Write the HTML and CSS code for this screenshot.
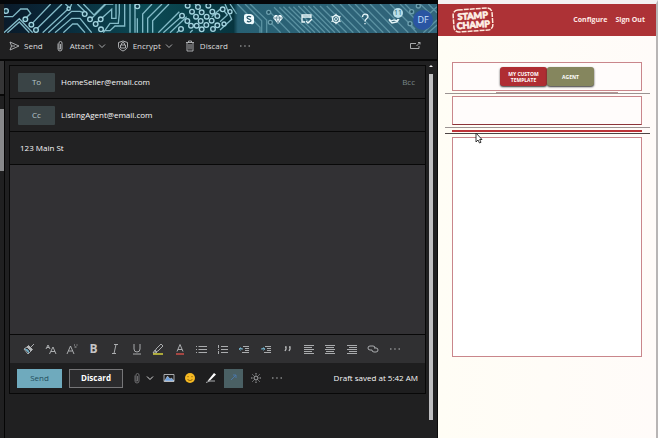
FILE: index.html
```html
<!DOCTYPE html>
<html lang="en">
<head>
<meta charset="utf-8">
<title>Mail</title>
<link rel="stylesheet" href="styles.css">
</head>
<body>
<div class="app">
  <main class="mail">
    <header class="banner">
      <svg class="circuit" viewBox="12 12 1299 87" preserveAspectRatio="xMinYMin slice" aria-hidden="true">
        <g class="trace">
          <path d="M12 50H38L62 27H82L92 40L78 54M12 98L58 56L98 98M22 98L58 66L88 98M99 68L152 12M112 85L186 12M128 98L205 26M145 98L215 34H240L262 42M165 98L215 55H240L275 98M190 98L218 72H232L255 98M205 20L196 12M215 12L210 24M232 12L256 36M250 12L282 45L315 12M276 54L318 12H340M290 68L335 28V55H348V12M298 92H330L345 78H374V12M310 98L330 70H355L358 40V12M390 12V98M405 12V98M412 24V12M428 98V42L456 12M412 98V55M443 98V55L486 12M458 98V62L507 12M475 98L538 35M490 98L546 48M510 98L560 50M530 98L545 84M560 20L570 12M585 12L592 20M620 12L628 20M635 50L660 28M570 98L578 90"/>
          <path d="M670 30L682 45L660 65M690 12L710 42M660 90L695 58L675 12M712 12L780 82V98M735 12L785 62V98M750 12L800 60V98M812 38L870 98M812 68L842 98M822 22L900 98M838 22L915 98M850 20L932 98M866 20L945 98M880 20L960 98M895 18L975 98M910 18L990 98M925 18L1005 98M940 18L1020 98M960 18L1040 98M980 18L1060 98M995 12L1080 98M1020 12L1105 98M1045 12L1130 98M1065 12L1150 98M1085 12L1170 98M1110 12L1195 98M1140 12L1225 98M1170 12L1245 87M1200 12L1255 67M1235 32L1215 12M1250 98L1232 78M1270 98L1311 60M1285 98L1311 75M1260 12L1290 40L1311 20M1285 12L1311 38"/>
        </g>
        <g class="pads">
          <circle cx="18" cy="33" r="7"/><circle cx="76" cy="58" r="7"/><circle cx="94" cy="74" r="7"/><circle cx="108" cy="90" r="7"/><circle cx="206" cy="26" r="5"/><circle cx="254" cy="42" r="7"/><circle cx="270" cy="58" r="7"/><circle cx="287" cy="72" r="7"/><circle cx="302" cy="58" r="7"/><circle cx="303" cy="88" r="7"/><circle cx="412" cy="19" r="7"/><circle cx="563" cy="17" r="7"/><circle cx="546" cy="47" r="7"/><circle cx="562" cy="63" r="7"/><circle cx="543" cy="87" r="7"/><circle cx="576" cy="35" r="7"/><circle cx="594" cy="21" r="7"/><circle cx="588" cy="50" r="7"/><circle cx="605" cy="37" r="7"/><circle cx="573" cy="77" r="7"/><circle cx="590" cy="77" r="7"/><circle cx="602" cy="63" r="7"/><circle cx="620" cy="50" r="7"/><circle cx="637" cy="35" r="7"/><circle cx="625" cy="17" r="7"/><circle cx="605" cy="88" r="7"/><circle cx="619" cy="75" r="7"/><circle cx="635" cy="62" r="7"/><circle cx="652" cy="48" r="7"/><circle cx="639" cy="87" r="7"/><circle cx="652" cy="76" r="7"/><circle cx="668" cy="28" r="7"/><circle cx="690" cy="35" r="6"/><circle cx="672" cy="72" r="6"/><circle cx="806" cy="37" r="6"/><circle cx="811" cy="67" r="6"/><circle cx="1235" cy="35" r="6"/><circle cx="1230" cy="71" r="6"/><circle cx="1255" cy="18" r="6"/>
        </g>
      </svg>
      <nav class="tools" aria-label="Account tools">
        <button aria-label="Skype"><svg viewBox="0 0 12 12"><path class="fill" d="M3 1h4a4 4 0 0 1 4 5v3a2 2 0 0 1-3 2H5a4 4 0 0 1-4-5V3a2 2 0 0 1 2-2z"/><path class="ink" d="M8 4C7 3 4 3 4 4.600S8 6 8 7.600 5 9 4 8"/></svg></button>
        <button aria-label="Premium"><svg viewBox="0 0 12 12"><path class="fill" d="M3 2h6l2 3-5 6-5-6z"/><path class="ink thin" d="M1.500 5h9M4 5l2 5 2-5M4 5l2-3 2 3"/></svg></button>
        <button aria-label="My day"><svg viewBox="0 0 12 12"><path class="heavy" d="M4 9H1V2h9v3M1 4h9M5 8l2 2 4-4"/></svg></button>
        <button aria-label="Settings"><svg viewBox="0 0 12 12"><circle cx="6" cy="6" r="1.500"/><circle class="heavy" cx="6" cy="6" r="3.500"/><path class="heavy" d="M6 .8v1.700M6 9.500v1.700M1.500 3.400L3 4.300M9 7.700l1.500.9M1.500 8.600L3 7.700M9 4.300l1.500-.9"/></svg></button>
        <button aria-label="Help"><svg viewBox="0 0 12 12"><path class="heavy" d="M3.500 4c0-4 5.500-3.500 5.500-.5C9 5.500 6 5.500 6 8.500M6 10v1.200"/></svg></button>
        <button class="notify" aria-label="Notifications"><svg viewBox="0 0 12 12"><path class="heavy" d="M1 6l2 2 3-1 3 1 1-2M1 7l3 3 5-1 2-3"/></svg><span class="count">11</span></button>
        <button class="avatar">DF</button>
      </nav>
    </header>

    <div class="commands" role="toolbar" aria-label="Message">
      <button><svg viewBox="0 0 12 12"><path d="M2 2l9 4-9 4 1.500-4zM3.500 6H7"/></svg>Send</button>
      <button><svg viewBox="0 0 12 12"><path d="M4 3.500V9a2 2 0 0 0 4 0V3a1.500 1.500 0 0 0-3 0v6h1.500V4"/></svg>Attach<svg class="chevron" viewBox="0 0 8 8"><path d="M1 2.500l3 3 3-3"/></svg></button>
      <button><svg viewBox="0 0 12 12"><path d="M6 1l4.500 1.500V6c0 2.500-2 4-4.500 5C3.500 10 1.500 8.500 1.500 6V2.500z"/><path d="M3.500 5h5v3h-5zM4.500 5V4a1.500 1.500 0 0 1 3 0v1"/></svg>Encrypt<svg class="chevron" viewBox="0 0 8 8"><path d="M1 2.500l3 3 3-3"/></svg></button>
      <button><svg viewBox="0 0 12 12"><path d="M2 2.500h8M4.500 2.500V1h3v1.500M3 2.500V11h6V2.500M5 4v5.500M7 4v5.500"/></svg>Discard</button>
      <button aria-label="More"><svg class="dots" viewBox="0 0 12 12"><path d="M1 6h1.500M5.200 6h1.500M9.500 6H11"/></svg></button>
      <button class="popout" aria-label="Open in new window"><svg viewBox="0 0 12 12"><path d="M7 3.500H1.500v5H10V6M7.500 6L11 2.500M9 2.500h2v2"/></svg></button>
    </div>

    <div class="workspace">
      <div class="rail"></div>
      <form class="compose">
        <div class="field">
          <button type="button" class="picker">To</button>
          <input type="email" aria-label="To" value="HomeSeller@email.com">
          <button type="button" class="bcc">Bcc</button>
        </div>
        <div class="field">
          <button type="button" class="picker">Cc</button>
          <input type="email" aria-label="Cc" value="ListingAgent@email.com">
        </div>
        <div class="field subject"><input type="text" aria-label="Subject" value="123 Main St"></div>
        <textarea class="message" aria-label="Message body"></textarea>
        <div class="format" role="toolbar" aria-label="Formatting">
          <button type="button" aria-label="Format painter"><svg viewBox="0 0 12 12"><path class="brush" d="M11 1L8 4M5.500 2.500l4 4-1.500 1.500-4-4z"/><path d="M4 4L1 6l4 5 3-3"/><path class="blue" d="M2 6l3 1 1 3z"/></svg></button>
          <button type="button" aria-label="Font"><svg viewBox="0 0 12 12"><path d="M1 6l2-4 2 4M2 4.500h2M4.500 11L8 4l3 7M6 8.500h4"/></svg></button>
          <button type="button" aria-label="Font size"><svg viewBox="0 0 12 12"><path d="M1 11l3.500-8L8 11M2.500 8h4M8 2h1M10.500 2h1M8.500 4h2"/></svg></button>
          <button type="button" class="bold" aria-label="Bold">B</button>
          <button type="button" aria-label="Italic"><svg viewBox="0 0 12 12"><path d="M5 1.500h4M3 10.500h4M7 1.500l-2 9"/></svg></button>
          <button type="button" aria-label="Underline"><svg viewBox="0 0 12 12"><path d="M3 1v5a3 3 0 0 0 6 0V1M2 11h8"/></svg></button>
          <button type="button" aria-label="Highlight"><svg viewBox="0 0 12 12"><path d="M4 6l5-5 2 2-5 5-3 1zM3 7L1 10h3l1-1"/><path class="yellow" d="M1 11h10"/></svg></button>
          <button type="button" aria-label="Font colour"><svg viewBox="0 0 12 12"><path d="M3 8.500l3-7 3 7M4 6.500h4"/><path class="red" d="M2 11h8"/></svg></button>
          <button type="button" aria-label="Bullets"><svg viewBox="0 0 12 12"><path d="M1 3.500h1M3.500 3.500H12M1 6.500h1M3.500 6.500H12M1 9.500h1M3.500 9.500H12"/></svg></button>
          <button type="button" aria-label="Numbering"><svg viewBox="0 0 12 12"><path d="M1.500 2v3M4 3.500h7M1 6.500h1M4 6.500h7M1.500 8v3M4 9.500h7"/></svg></button>
          <button type="button" aria-label="Decrease indent"><svg viewBox="0 0 12 12"><path d="M5 3.500h6M7 5.500h4M7 7.500h4M4 9.500h7"/><path class="blue" d="M5 6H1l1.500-1.500M1 6l1.500 1.500"/></svg></button>
          <button type="button" aria-label="Increase indent"><svg viewBox="0 0 12 12"><path d="M5 3.500h6M7 5.500h4M7 7.500h4M4 9.500h7"/><path class="blue" d="M1 6h4L3.500 4.500M5 6L3.500 7.500"/></svg></button>
          <button type="button" aria-label="Quote"><svg viewBox="0 0 12 12"><path class="heavy" d="M4 4h1v2L4 8M8 4h1v2L8 8"/></svg></button>
          <button type="button" aria-label="Align left"><svg viewBox="0 0 12 12"><path d="M1 2.500h10M1 4.500h8M1 6.500h10M1 8.500h8M1 10.500h10"/></svg></button>
          <button type="button" aria-label="Align centre"><svg viewBox="0 0 12 12"><path d="M1 2.500h10M2 4.500h8M1 6.500h10M2 8.500h8M1 10.500h10"/></svg></button>
          <button type="button" aria-label="Align right"><svg viewBox="0 0 12 12"><path d="M1 2.500h10M3 4.500h8M1 6.500h10M3 8.500h8M1 10.500h10"/></svg></button>
          <button type="button" aria-label="Link"><svg viewBox="0 0 12 12"><path d="M5 7H3a2 2 0 0 1 0-4h3a2 2 0 0 1 2 2M7 5h2a2 2 0 0 1 0 4H7a2 2 0 0 1-2-2"/></svg></button>
          <button type="button" aria-label="More formatting"><svg class="dots" viewBox="0 0 12 12"><path d="M1 6h1.500M5.200 6h1.500M9.500 6H11"/></svg></button>
        </div>
        <div class="actions">
          <button type="submit" class="send">Send</button>
          <button type="button" class="discard">Discard</button>
          <div class="inserts">
            <button type="button" class="attach" aria-label="Attach"><svg class="dim" viewBox="0 0 12 12"><path d="M4 3.500V9a2 2 0 0 0 4 0V3a1.500 1.500 0 0 0-3 0v6h1.500V4"/></svg><svg class="chevron" viewBox="0 0 8 8"><path d="M1 2.500l3 3 3-3"/></svg></button>
            <button type="button" aria-label="Picture"><svg viewBox="0 0 12 12"><path d="M1 2.500h10v7H1z"/><path class="photo" d="M1.500 9l3-5 2.500 3 1.500-1L11 9z"/></svg></button>
            <button type="button" aria-label="Emoji"><svg viewBox="0 0 12 12"><circle class="face" cx="6" cy="6" r="5"/><path class="smile" d="M4 4v1.200M8 4v1.200M3.500 7c1 2 4 2 5 0"/></svg></button>
            <button type="button" aria-label="Signature"><svg viewBox="0 0 12 12"><path class="fill" d="M9 1l2 1.500-6 6L2.500 9z"/><path d="M1 10.500l4-1.500h5"/></svg></button>
            <button type="button" class="addin" aria-label="Stamp Champ"><svg viewBox="0 0 12 12"><path d="M3 8l5-5M5 3h3v3"/></svg></button>
            <button type="button" aria-label="Brightness"><svg viewBox="0 0 12 12"><circle cx="6" cy="6" r="2"/><path d="M6 1v1.500M6 9.500V11M1 6h1.500M9.500 6H11M2.500 2.500l1 1M8.500 8.500l1 1M9.500 2.500l-1 1M3.500 8.500l-1 1"/></svg></button>
            <button type="button" aria-label="More options"><svg class="dots" viewBox="0 0 12 12"><path d="M1 6h1.500M5.200 6h1.500M9.500 6H11"/></svg></button>
          </div>
          <output class="status">Draft saved at 5:42 AM</output>
        </div>
      </form>
      <div class="scroll" aria-hidden="true"></div>
    </div>
  </main>

  <aside class="panel">
    <header class="brandbar">
      <svg class="logo" viewBox="0 0 42 26" role="img" aria-label="Stamp Champ">
        <g transform="rotate(-4 21 13)">
          <rect x="1.500" y="2" width="39" height="22" rx="5"/>
          <text x="21" y="12" text-anchor="middle">STAMP</text>
          <text x="21" y="21" text-anchor="middle">CHAMP</text>
        </g>
      </svg>
      <nav class="links"><a href="#configure">Configure</a><a href="#signout">Sign Out</a></nav>
    </header>
    <div class="stamps">
      <section class="box choices">
        <button class="stamp custom">MY CUSTOM TEMPLATE</button>
        <button class="stamp agent">AGENT</button>
      </section>
      <hr class="short">
      <hr class="wide">
      <section class="box small"></section>
      <hr class="wide">
      <hr class="accent">
      <hr class="wide dark">
      <section class="box large"></section>
    </div>
    <svg class="cursor" viewBox="0 0 8 12" aria-hidden="true"><path d="M1 1v9l2-2 1.500 3 1.500-.7L4.700 7.500H7z"/></svg>
  </aside>
</div>
</body>
</html>
```

FILE: styles.css
```css
* { box-sizing: border-box; }

body {
  margin: 0;
  background: #202021;
  color: #f8f8f8;
  font: 8px/12px "Open Sans", "Noto Sans", sans-serif;
}

button, input, textarea {
  margin: 0;
  padding: 0;
  border: 0;
  background: none;
  color: inherit;
  font: inherit;
}

button { display: flex; align-items: center; justify-content: center; }

svg {
  display: block;
  flex: none;
  width: 12px;
  height: 12px;
  fill: none;
  stroke: #b8babc;
  stroke-width: 0.9;
}

.app {
  display: grid;
  grid-template-columns: minmax(0, 1fr) 220px;
  min-height: 100vh;
}

.mail {
  display: flex;
  flex-direction: column;
  border-top: 4px solid #05070a;
  border-right: 1px solid #0c0c0c;
}

/* Banner */
.banner {
  position: relative;
  display: flex;
  justify-content: flex-end;
  height: 29px;
  margin-left: 4px;
  overflow: hidden;
  background: linear-gradient(90deg, #0a1a2a 0, #092b3c 14%, #0b4a54 33%, #07353f 53%, #276073 54%, #32657b 100%);
}

.circuit {
  position: absolute;
  inset: 0;
  width: 100%;
  height: 100%;
  mask-image: linear-gradient(90deg, #000 53%, #0008 54%);
}
.trace { stroke: #83bac7; stroke-width: 4; }
.pads { fill: #123c4b; stroke: #a3d4df; stroke-width: 4; }

.tools { position: relative; display: flex; align-items: center; gap: 17px; }
.tools svg { stroke: #e6f5f8; }
.tools .fill { fill: #eefafd; stroke: none; }
.tools .ink { stroke: #28586b; stroke-width: 1.2; }
.tools .thin { stroke-width: 0.6; }
.heavy { stroke-width: 1.3; }
.notify { position: relative; }
.count {
  position: absolute;
  left: 5px;
  top: -5px;
  width: 10px;
  height: 10px;
  border-radius: 50%;
  background: #b9dfea;
  color: #28586b;
  font-size: 7px;
  line-height: 10px;
}
.avatar {
  width: 20px;
  height: 20px;
  margin: 2px 4px 0 -4px;
  border-radius: 50%;
  background: #2a55a3;
  color: #cce2ff;
  font-size: 9px;
}

/* Message commands */
.commands {
  display: flex;
  align-items: center;
  gap: 11px;
  height: 26px;
  padding: 0 16px 0 8px;
  color: #dedede;
}
.commands button { gap: 4px; }
.chevron { width: 8px; height: 8px; }
.dots { stroke-width: 1.2; }
.popout { margin-left: auto; }

/* Compose form */
.workspace {
  display: grid;
  grid-template-columns: 5px minmax(0, 1fr) 11px;
  flex: 1;
  border-top: 2px solid #080808;
}
.rail {
  border-right: 1px solid #050505;
  background: linear-gradient(#353536 33px, #080808 33px 35px, #202021 35px 48px, #88898b 48px 110px, #202021 110px);
}
.compose {
  align-self: start;
  margin: 4px 0 0 4px;
  border: 1px solid #080808;
}
.field {
  display: flex;
  align-items: center;
  gap: 6px;
  height: 33px;
  padding: 0 10px 0 8px;
  border-bottom: 1px solid #080808;
  background: #222223;
}
.field input { flex: 1; min-width: 0; outline: 0; }
.picker { width: 37px; height: 19px; border-radius: 1px; background: #3a4446; color: #b9c8cb; }
.bcc { color: #788688; }
.field.subject { padding-left: 10px; }
.message {
  display: block;
  width: 100%;
  height: 170px;
  border-bottom: 1px solid #080808;
  background: #323134;
  resize: none;
}
.format {
  display: flex;
  align-items: center;
  justify-content: space-between;
  height: 28px;
  padding: 0 24px 0 13px;
  background: #303032;
}
.format button { flex: none; width: 12px; }
.bold { color: #c6c6c6; font-size: 12px; font-weight: 700; }
.brush { fill: #b8babc; }
.format .blue { fill: #6ea8bf; stroke: #6ea8bf; }
.yellow { stroke: #d4d13c; stroke-width: 1.5; }
.red { stroke: #cc4e48; stroke-width: 1.5; }

.actions {
  display: flex;
  align-items: center;
  gap: 7px;
  height: 30px;
  padding: 0 7px;
  background: #1e1e1f;
}
.send { width: 45px; height: 19px; background: #6faabd; color: #234d5c; }
.discard { width: 54px; height: 19px; border: 1px solid #767678; background: #2b2b2d; color: #fff; font-weight: 700; }
.inserts { display: flex; align-items: center; gap: 9px; margin-left: 1px; }
.attach { gap: 3px; }
.dim { stroke: #747476; }
.inserts .chevron { stroke: #eee; }
.photo { fill: #6d9fdb; stroke: #fff; stroke-width: 0.4; }
.face { fill: #f5b923; stroke: none; }
.smile { stroke: #805500; }
.inserts .fill { fill: #fff; stroke: none; }
.addin { width: 19px; height: 19px; margin: 0 -2px; background: #4a6064; }
.addin svg { stroke: #4b78ad; }
.status { margin-left: auto; white-space: nowrap; }

.scroll {
  display: flow-root;
  width: 4px;
  height: 346px;
  margin: 13px 0 0 3px;
  background: #bfbfc1;
}
.scroll::before {
  content: "";
  display: block;
  width: 4px;
  height: 2px;
  margin-top: -9px;
  background: #eee;
  clip-path: polygon(50% 0, 100% 100%, 0 100%);
}

/* Add-in panel */
.panel {
  position: relative;
  border-top: 4px solid #f4f1f2;
  border-right: 2px solid #b8b5b5;
  background: linear-gradient(90deg, #fffdf5, #fffbf9);
}
.brandbar {
  display: flex;
  align-items: center;
  justify-content: space-between;
  height: 32px;
  padding: 0 11px 0 14px;
  background: #ad3236;
}
.logo { width: 42px; height: 26px; stroke: #ffe9dc; }
.logo rect { stroke-width: 1.5; stroke-dasharray: 5 1; }
.logo text { fill: #fff3e9; stroke: #fff3e9; stroke-width: 0.6; font: 900 9px/9px Lato, sans-serif; }
.links { display: flex; gap: 8px; }
.links a { color: #ffe9e5; font-size: 7px; font-weight: 700; text-decoration: none; }

.stamps { display: flex; flex-direction: column; padding: 26px 6px 0 7px; }
.box { margin: 0 8px 0 7px; border: 1px solid #c9868b; background: #fffcfb; }
.choices { display: flex; justify-content: center; height: 29px; padding-top: 4px; }
.stamp {
  width: 47px;
  height: 19px;
  border-radius: 3px;
  box-shadow: 0 1px 2px #333;
  color: #fff;
  font: 700 5px/6px "Open Sans", sans-serif;
}
.custom { background: #af2d32; }
.agent { background: #85865e; }
hr { width: auto; height: 1px; margin: 0; border: 0; background: #9b9392; }
.short { margin: 1px 32px 0 51px; background: #b79494; }
.short + .wide { margin-bottom: 2px; }
.small { height: 29px; margin-bottom: 2px; border-bottom-color: #8c3439; }
.accent { height: 2px; margin: 2px 8px 1px 7px; background: #bd3338; }
.dark { background: #4d4444; }
.large { height: 220px; margin-top: 3px; background: #fff; }
.cursor { position: absolute; left: 37px; top: 128px; width: 8px; height: 12px; fill: #fff; stroke: #222; }
```
